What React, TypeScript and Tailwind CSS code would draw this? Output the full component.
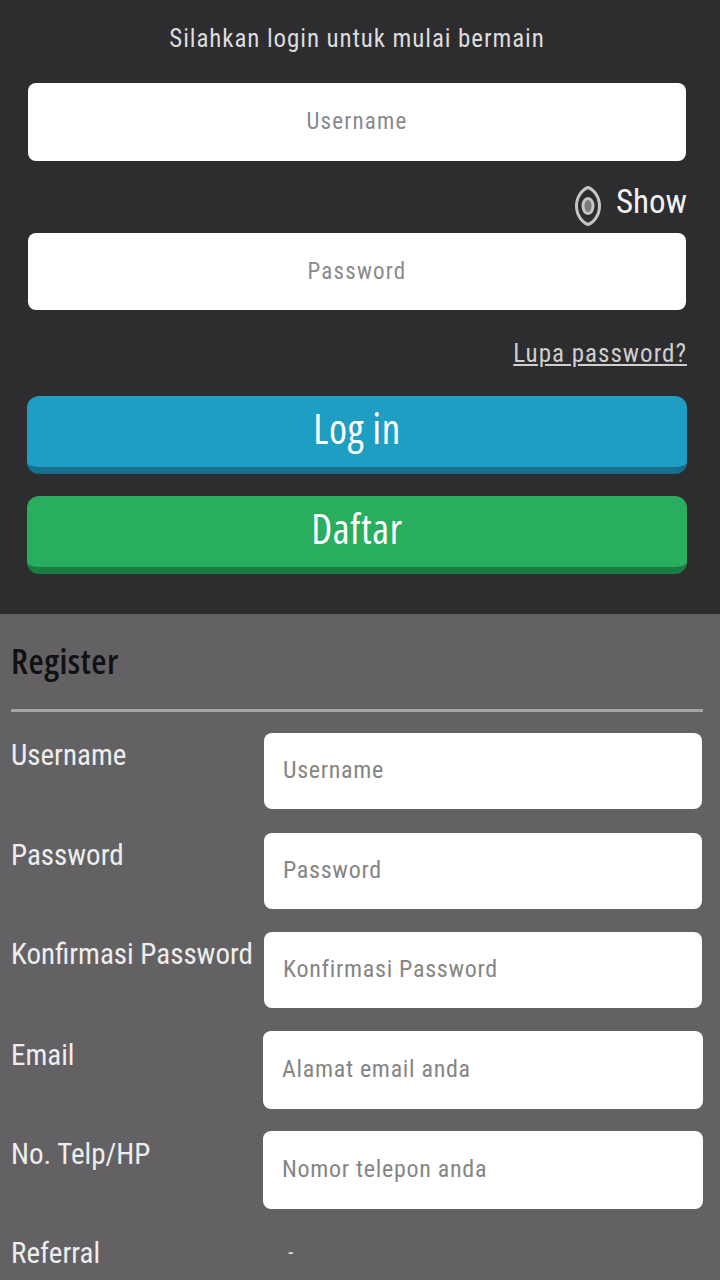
const rows = [
  { label: "Username", placeholder: "Username", box: "h-[76px] ml-[264px] mr-[18px]", gap: "mb-[24px]", top: "top-[4px]" },
  { label: "Password", placeholder: "Password", box: "h-[76px] ml-[264px] mr-[18px]", gap: "mb-[23px]", top: "top-[4px]" },
  { label: "Konfirmasi Password", placeholder: "Konfirmasi Password", box: "h-[76px] ml-[264px] mr-[18px]", gap: "mb-[23px]", top: "top-[4px]" },
  { label: "Email", placeholder: "Alamat email anda", box: "h-[78px] ml-[263px] mr-[17px]", gap: "mb-[22px]", top: "top-[6px]" },
  { label: "No. Telp/HP", placeholder: "Nomor telepon anda", box: "h-[78px] ml-[263px] mr-[17px]", gap: "mb-[26px]", top: "top-[5px]" },
];

export default function App() {
  return (
    <div className="w-[720px] h-[1280px] overflow-hidden bg-[#636164] font-['Roboto',sans-serif] [font-stretch:85%]">
      {/* Login */}
      <section className="h-[614px] bg-[#2d2c2e] pl-[28px] pr-[33px] pt-[23px]">
        <p className="w-[658px] text-center text-[25px] leading-[32px] tracking-[0.9px] text-[#dcdcdc]">Silahkan login untuk mulai bermain</p>
        <input
          placeholder="Username"
          className="mt-[28px] block h-[78px] w-[658px] rounded-[8px] bg-white pb-[2px] text-center text-[23px] tracking-[1.2px] text-black outline-none placeholder:text-[#8a8a8a]"
        />
        <div className="mt-[22px] flex h-[50px] items-start justify-end">
          <svg viewBox="0 0 26 40" className="mr-[15px] mt-[3px] h-[40px] w-[26px]" fill="none" stroke="#c4c4c4">
            <path d="M13 1.5C19 3.5 24.5 11 24.5 20C24.5 29 19 36.5 13 38.5C7 36.5 1.5 29 1.5 20C1.5 11 7 3.5 13 1.5Z" strokeWidth="3" />
            <ellipse cx="13" cy="20" rx="5" ry="7.5" strokeWidth="3" fill="#7a7a7a" />
          </svg>
          <span className="text-[33px] leading-[38px] text-[#f2f2f2]">Show</span>
        </div>
        <input
          placeholder="Password"
          className="block h-[77px] w-[658px] rounded-[8px] bg-white text-center text-[23px] tracking-[1.2px] text-black outline-none placeholder:text-[#8a8a8a]"
        />
        <div className="mt-[28px] text-right text-[25px] leading-[32px] tracking-[1px]">
          <a className="text-[#cfcfcf] underline">Lupa password?</a>
        </div>
        <button className="mt-[26px] block h-[78px] w-[660px] -translate-x-px rounded-[12px] border-b-[7px] border-[#176f8e] bg-[#1f9ec3] pb-[6px] font-['Open_Sans',sans-serif] text-[41px] tracking-[0.7px] text-white [font-stretch:75%]">
          Log in
        </button>
        <button className="mt-[22px] block h-[78px] w-[660px] -translate-x-px rounded-[12px] border-b-[7px] border-[#1b7c41] bg-[#29ae5f] pb-[6px] font-['Open_Sans',sans-serif] text-[41px] tracking-[0.7px] text-white [font-stretch:75%]">
          Daftar
        </button>
      </section>

      {/* Register */}
      <section>
        <h2 className="pl-[11px] pt-[26px] font-['Open_Sans',sans-serif] text-[35px] font-semibold leading-[42px] tracking-[0.5px] text-[#111] [font-stretch:75%]">Register</h2>
        <div className="ml-[11px] mr-[17px] mb-[21px] mt-[27px] h-[3px] bg-[#a5a4a6]" />
        {rows.map((r) => (
          <div key={r.label} className={"relative " + r.gap}>
            <label className={"absolute left-[11px] text-[29px] leading-[36px] text-[#eeeeee] " + r.top}>{r.label}</label>
            <div className={r.box}>
              <input
                placeholder={r.placeholder}
                className="block h-full w-full rounded-[8px] bg-white pb-[2px] pl-[19px] text-[24px] tracking-[0.7px] text-black outline-none placeholder:text-[#858585]"
              />
            </div>
          </div>
        ))}
        <div className="flex items-center pl-[11px] text-[29px] leading-[36px] text-[#eeeeee]">
          <span className="w-[277px]">Referral</span>
          <span className="text-[22px] text-[#dddddd]">-</span>
        </div>
      </section>
    </div>
  );
}
